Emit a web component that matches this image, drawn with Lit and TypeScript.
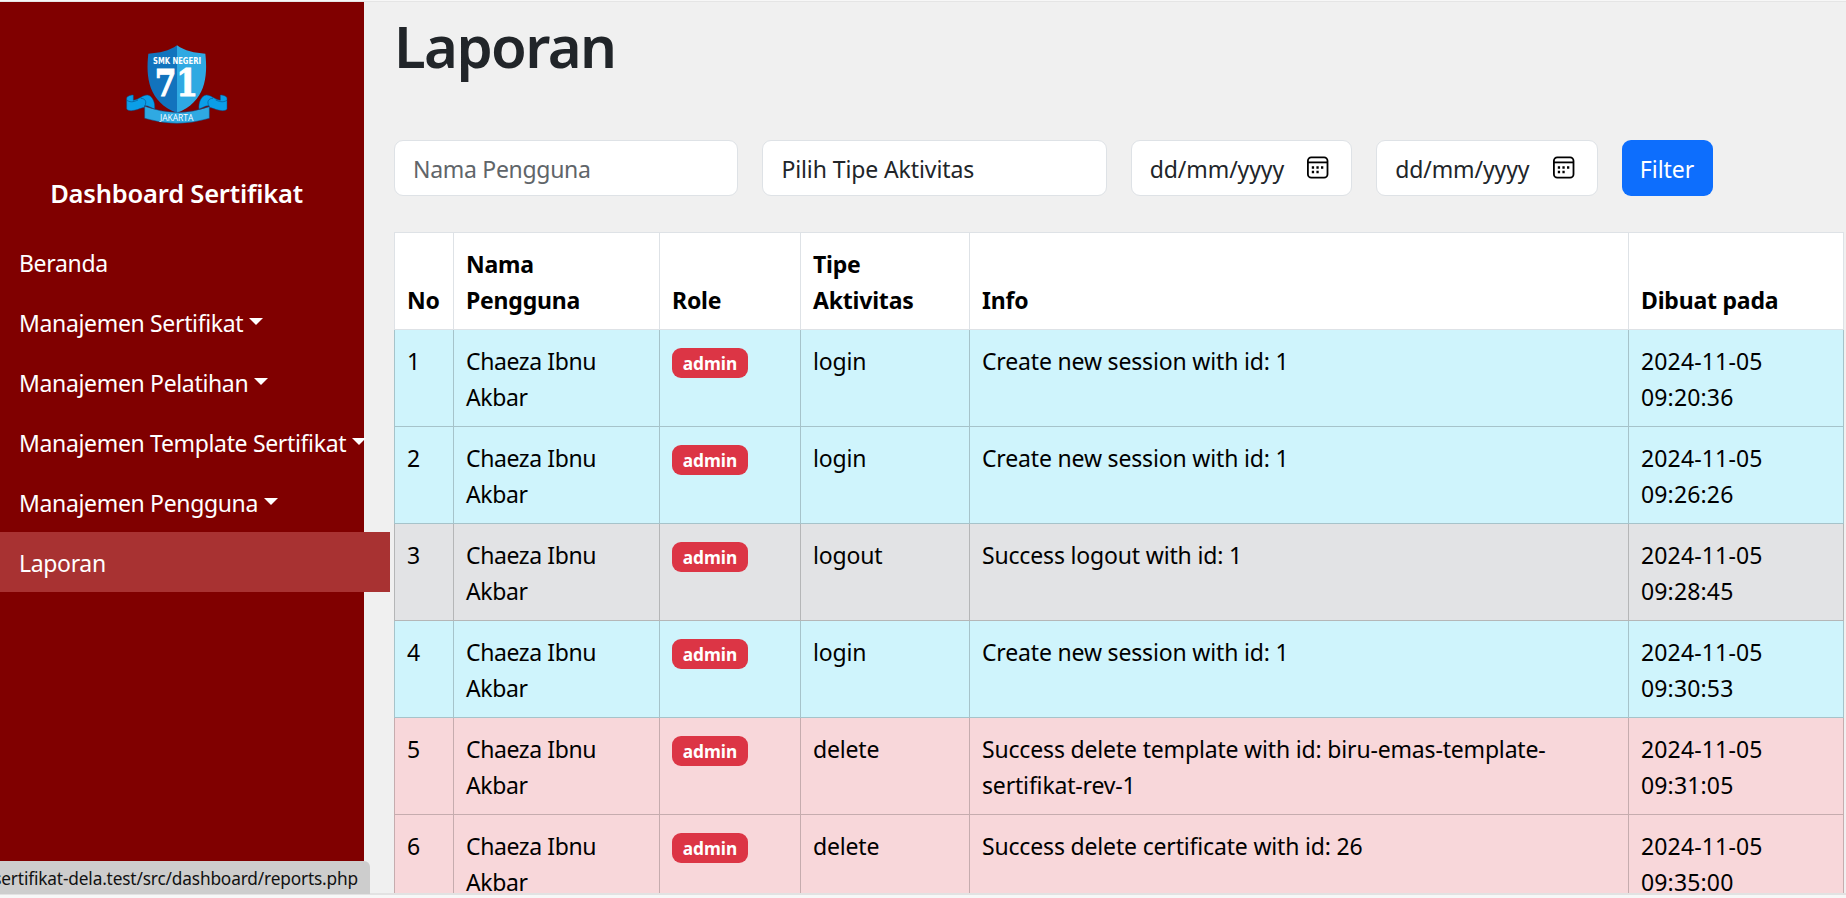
import { LitElement, html, css, svg } from "lit";
import { customElement } from "lit/decorators.js";

type Kind = "info" | "secondary" | "danger";
interface Row { name: string; role: string; type: string; info: string; date: string; kind: Kind; }

const NAME = "Chaeza Ibnu Akbar";
const ROWS: Row[] = [
  { name: NAME, role: "admin", type: "login", info: "Create new session with id: 1", date: "2024-11-05 09:20:36", kind: "info" },
  { name: NAME, role: "admin", type: "login", info: "Create new session with id: 1", date: "2024-11-05 09:26:26", kind: "info" },
  { name: NAME, role: "admin", type: "logout", info: "Success logout with id: 1", date: "2024-11-05 09:28:45", kind: "secondary" },
  { name: NAME, role: "admin", type: "login", info: "Create new session with id: 1", date: "2024-11-05 09:30:53", kind: "info" },
  { name: NAME, role: "admin", type: "delete", info: "Success delete template with id: biru-emas-template-sertifikat-rev-1", date: "2024-11-05 09:31:05", kind: "danger" },
  { name: NAME, role: "admin", type: "delete", info: "Success delete certificate with id: 26", date: "2024-11-05 09:35:00", kind: "danger" },
];

const NAV = [
  { label: "Beranda", menu: false },
  { label: "Manajemen Sertifikat", menu: true },
  { label: "Manajemen Pelatihan", menu: true },
  { label: "Manajemen Template Sertifikat", menu: true },
  { label: "Manajemen Pengguna", menu: true },
  { label: "Laporan", menu: false, active: true },
];

@customElement("school-logo")
class SchoolLogo extends LitElement {
  static styles = css`
    :host { display: block; width: 102px; height: 80px; }
    svg { display: block; width: 100%; height: 100%; }
    .seven { font: 700 109px "DejaVu Serif", serif; stroke: #fff; stroke-width: 3px; }
    .school { font: 700 24px "DejaVu Sans", sans-serif; }
    .city { font: 400 27px "Open Sans", sans-serif; }
  `;
  render() {
    return html`<svg viewBox="48 46 306 240">
      ${svg`
      <path d="M70 197 C70 195 64 196 58 198 C50 201 50 204 50 210 V238 C53 243 62 244 72 242 C86 240 94 234 104 233 L103 229 C112 226 122 234 134 238 C136 220 128 198 112 196 C98 196 90 208 70 212 Z" fill="#0b9ee8" stroke="#07518c" stroke-width="1.5"/>
      <path d="M331 197 C331 195 337 196 343 198 C351 201 351 204 351 210 V238 C348 243 339 244 329 242 C315 240 307 234 297 233 L298 229 C289 226 279 234 267 238 C265 220 273 198 289 196 C303 196 311 208 331 212 Z" fill="#0b9ee8" stroke="#07518c" stroke-width="1.5"/>
      <path d="M50 212 C64 220 74 215 84 211 M351 212 C337 220 327 215 317 211 M104 230 C112 214 104 206 92 206 M297 230 C289 214 297 206 309 206" fill="none" stroke="#07518c" stroke-width="2"/>
      <path d="M201 47 C178 64 148 70 115 72 C107 142 115 216 201 250 Z" fill="#1273bd"/>
      <path d="M201 47 C224 64 254 70 286 72 C294 142 286 216 201 250 Z" fill="#2fa9e2"/>
      <path d="M104 230 Q201 266 298 231 V266 Q201 296 104 266 Z" fill="#2fa9e2" stroke="#07518c" stroke-width="1.5"/>
      <text class="school" x="129" y="104" textLength="144" lengthAdjust="spacingAndGlyphs" fill="#fff">SMK NEGERI</text>
      <text class="seven" x="134" y="199" textLength="130" lengthAdjust="spacingAndGlyphs" fill="#fff">71</text>
      <text class="city" x="150" y="275" textLength="100" lengthAdjust="spacingAndGlyphs" fill="#fff">JAKARTA</text>`}
    </svg>`;
  }
}

@customElement("calendar-icon")
class CalendarIcon extends LitElement {
  static styles = css`
    :host { display: block; width: 24px; height: 24px; }
    svg { display: block; }
  `;
  render() {
    return html`<svg width="24" height="24" viewBox="0 0 24 24" fill="none" stroke="#000" stroke-width="1.8">
      <rect x="1.9" y="1.4" width="19.6" height="20.2" rx="3.4"/>
      <path d="M2 6.4H21.5"/>
      <path d="M5.8 11.5h2.3M10.4 11.5h2.3M15 11.5h2.3M5.8 16h2.3M10.4 16h2.3" stroke-width="2.3"/>
    </svg>`;
  }
}

@customElement("app-root")
class AppRoot extends LitElement {
  static styles = css`
    :host {
      display: flex; flex-direction: column; height: 898px; overflow: hidden; position: relative;
      background: #f0f0f0; color: #212529;
      font-family: "Noto Sans", "Open Sans", sans-serif; font-size: 23px; line-height: 36px;
    }
    * { box-sizing: border-box; }
    .top { height: 2px; flex: none; background: #f7f7f7; border-bottom: 1px solid #e5e5e5; }
    .shell { display: flex; height: 891px; flex: none; overflow: hidden; }
    .bottom { flex: 1; background: #f7f7f7; border-top: 2px solid #e2e2e2; }
    .side { width: 364px; flex: none; background: #800000; color: #fff; display: flex; flex-direction: column; }
    .brand { display: flex; flex-direction: column; align-items: center; padding-top: 43px; padding-right: 11px; height: 230px; }
    .brand-name { margin: 50px 0 0 0; font-size: 25.5px; font-weight: 600; line-height: 36px; white-space: nowrap; letter-spacing: -0.2px; }
    .nav { display: flex; flex-direction: column; align-items: flex-start; }
    .link { height: 60px; padding: 14px 0 12px 19px; width: 390px; white-space: nowrap; display: flex; align-items: center; letter-spacing: -0.34px; }
    .active { background: #a83232; }
    .caret { margin-left: 6px; border: 7px solid transparent; border-top-color: #fff; border-bottom: 0; margin-top: -3px; }
    .main { padding: 10px 2px 0 30px; width: 1482px; flex: none; }
    .title { margin: 0; font-size: 58px; line-height: 68px; font-weight: 600; letter-spacing: -1.6px; }
    .filters { display: flex; gap: 24px; margin-top: 60px; height: 56px; }
    .field { height: 56px; background: #fff; border: 1px solid #dee2e6; border-radius: 9px; padding: 2px 18px 0; display: flex; align-items: center; justify-content: space-between; white-space: nowrap; letter-spacing: -0.1px; }
    .wide { width: 344.4px; }
    .date { width: 221.4px; padding-right: 21px; }
    .hint { color: #5f6569; letter-spacing: -0.3px; }
    .date calendar-icon { margin-top: -2px; }
    .btn { font: inherit; color: #fff; background: #0d6efd; border: 0; border-radius: 9px; width: 91px; height: 56px; padding: 2px 0 0; }
    .table { margin-top: 36px; border-collapse: collapse; table-layout: fixed; width: 1450px; color: #000; background: #fff; letter-spacing: -0.17px; }
    .table th, .table td { padding: 13px 12px 11px; border: 1px solid #dee2e6; text-align: left; vertical-align: top; height: 97px; }
    .table th { vertical-align: bottom; font-weight: 700; letter-spacing: -0.2px; }
    .no { width: 59px; } .name { width: 206px; } .role { width: 141px; } .type { width: 169px; } .info-col { width: 659px; }
    .table td.person { letter-spacing: -0.4px; }
    .table td.stamp { letter-spacing: 0.15px; }
    .table .info td { background: #cff4fc; border-color: #a6c3ca; }
    .table .secondary td { background: #e2e3e5; border-color: #b5b6b7; }
    .table .danger td { background: #f8d7da; border-color: #c6acae; }
    .badge { display: inline-block; height: 30px; line-height: 31px; width: 76px; text-align: center; background: #dc3545; color: #fff; border-radius: 9px; font-weight: 700; font-size: 17.3px; vertical-align: top; margin-top: 5px; letter-spacing: 0; }
    .status { position: absolute; left: 0; top: 861px; width: 370px; height: 33px; background: #cdcdcd; color: #111; border-radius: 0 6px 0 0; font-size: 17.3px; line-height: 35px; letter-spacing: -0.17px; overflow: hidden; display: flex; justify-content: flex-end; padding-right: 12px; white-space: nowrap; }
  `;

  render() {
    return html`
      <div class="top"></div>
      <div class="shell">
        <aside class="side">
          <div class="brand">
            <school-logo></school-logo>
            <div class="brand-name">Dashboard Sertifikat</div>
          </div>
          <nav class="nav">
            ${NAV.map((n) => html`<a class="link ${n.active ? "active" : ""}"><span>${n.label}</span>${n.menu ? html`<span class="caret"></span>` : ""}</a>`)}
          </nav>
        </aside>
        <main class="main">
          <h1 class="title">Laporan</h1>
          <div class="filters">
            <div class="field wide hint">Nama Pengguna</div>
            <div class="field wide">Pilih Tipe Aktivitas</div>
            <div class="field date"><span>dd/mm/yyyy</span><calendar-icon></calendar-icon></div>
            <div class="field date"><span>dd/mm/yyyy</span><calendar-icon></calendar-icon></div>
            <button class="btn">Filter</button>
          </div>
          <table class="table">
            <thead><tr>
              <th class="no">No</th><th class="name">Nama Pengguna</th><th class="role">Role</th>
              <th class="type">Tipe Aktivitas</th><th class="info-col">Info</th><th>Dibuat pada</th>
            </tr></thead>
            <tbody>
              ${ROWS.map((r, i) => html`<tr class=${r.kind}>
                <td>${i + 1}</td><td class="person">${r.name}</td><td><span class="badge">${r.role}</span></td>
                <td>${r.type}</td><td>${r.info}</td><td class="stamp">${r.date}</td>
              </tr>`)}
            </tbody>
          </table>
        </main>
      </div>
      <div class="bottom"></div>
      <div class="status"><span>sertifikat-dela.test/src/dashboard/reports.php</span></div>
    `;
  }
}
